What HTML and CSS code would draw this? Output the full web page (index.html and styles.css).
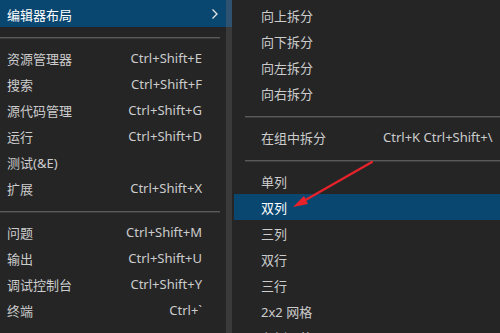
FILE: index.html
```html
<!DOCTYPE html>
<html lang="zh-CN">
<head>
<meta charset="utf-8">
<title>编辑器布局</title>
<link rel="stylesheet" href="styles.css">
</head>
<body>
<div class="screen">
  <div class="menu menu-left">
    <div class="item item-first active"><span class="label">编辑器布局</span><span class="key"></span><span class="chev"><svg width="8" height="12" viewBox="0 0 8 12"><path d="M1.5 1.5 L6 6 L1.5 10.5" fill="none" stroke="#e6e6e6" stroke-width="1.3"/></svg></span></div>
    <div class="sep"></div>
    <div class="item"><span class="label">资源管理器</span><span class="key">Ctrl+Shift+E</span><span class="chev"></span></div>
    <div class="item"><span class="label">搜索</span><span class="key">Ctrl+Shift+F</span><span class="chev"></span></div>
    <div class="item"><span class="label">源代码管理</span><span class="key">Ctrl+Shift+G</span><span class="chev"></span></div>
    <div class="item"><span class="label">运行</span><span class="key">Ctrl+Shift+D</span><span class="chev"></span></div>
    <div class="item"><span class="label">测试(&amp;E)</span><span class="key"></span><span class="chev"></span></div>
    <div class="item"><span class="label">扩展</span><span class="key">Ctrl+Shift+X</span><span class="chev"></span></div>
    <div class="sep"></div>
    <div class="item"><span class="label">问题</span><span class="key">Ctrl+Shift+M</span><span class="chev"></span></div>
    <div class="item"><span class="label">输出</span><span class="key">Ctrl+Shift+U</span><span class="chev"></span></div>
    <div class="item"><span class="label">调试控制台</span><span class="key">Ctrl+Shift+Y</span><span class="chev"></span></div>
    <div class="item"><span class="label">终端</span><span class="key">Ctrl+`</span><span class="chev"></span></div>
  </div>
  <div class="edge"><div class="edge-top"></div></div>
  <div class="menu menu-right">
    <div class="item"><span class="label">向上拆分</span></div>
    <div class="item"><span class="label">向下拆分</span></div>
    <div class="item"><span class="label">向左拆分</span></div>
    <div class="item"><span class="label">向右拆分</span></div>
    <div class="sep"></div>
    <div class="item"><span class="label">在组中拆分</span><span class="key">Ctrl+K Ctrl+Shift+\</span></div>
    <div class="sep"></div>
    <div class="item"><span class="label">单列</span></div>
    <div class="item active"><span class="label">双列</span></div>
    <div class="item"><span class="label">三列</span></div>
    <div class="item"><span class="label">双行</span></div>
    <div class="item"><span class="label">三行</span></div>
    <div class="item"><span class="label">2x2 网格</span></div>
    <div class="item"><span class="label">左侧网格</span></div>
  </div>
  <svg class="arrow" width="500" height="333" viewBox="0 0 500 333">
    <line x1="372" y1="162" x2="302" y2="202" stroke="#e8222a" stroke-width="2.2" stroke-linecap="round"/>
    <polygon points="293,207 304,196 308,204" fill="#e8222a"/>
  </svg>
</div>
</body>
</html>
```

FILE: styles.css
```css
html, body {
  margin: 0;
  padding: 0;
  background: #252526;
}
.screen {
  position: relative;
  width: 500px;
  height: 333px;
  overflow: hidden;
  display: flex;
  background: #252526;
  font-family: "Noto Sans", "Noto Sans CJK SC", sans-serif;
  font-size: 13px;
  color: #cccccc;
}
.menu {
  display: flex;
  flex-direction: column;
  flex-shrink: 0;
}
.menu-left {
  width: 226px;
}
.edge {
  width: 6px;
  flex-shrink: 0;
  background: #3a3a3b;
}
.edge-top {
  height: 27px;
  background: #2f5270;
}
.menu-right {
  flex: 1;
  padding: 2px 0 0 2px;
  min-width: 0;
}
.item {
  display: flex;
  align-items: center;
  height: 26px;
  flex-shrink: 0;
  white-space: nowrap;
}
.item-first {
  height: 27px;
  padding-top: 1px;
  box-sizing: border-box;
}
.menu-left .item {
  padding-left: 7px;
}
.menu-right .item {
  padding-left: 27px;
}
.label {
  flex: 1;
}
.menu-right .label {
  flex: 0 0 122px;
}
.key {
  text-align: right;
}
.chev {
  width: 22px;
  display: flex;
  justify-content: center;
  padding-left: 2px;
}
.active {
  background: #094771;
  color: #ffffff;
}
.sep {
  height: 18px;
  flex-shrink: 0;
  position: relative;
}
.sep::after {
  content: "";
  position: absolute;
  top: 10px;
  height: 1px;
  background: #5a5a5a;
  box-shadow: 0 1px 0 #3a3a3a;
}
.menu-left .sep::after {
  left: 0;
  right: 6px;
}
.menu-right .sep::after {
  left: 11px;
  right: 0;
}
.arrow {
  position: absolute;
  left: 0;
  top: 0;
  pointer-events: none;
}
```
